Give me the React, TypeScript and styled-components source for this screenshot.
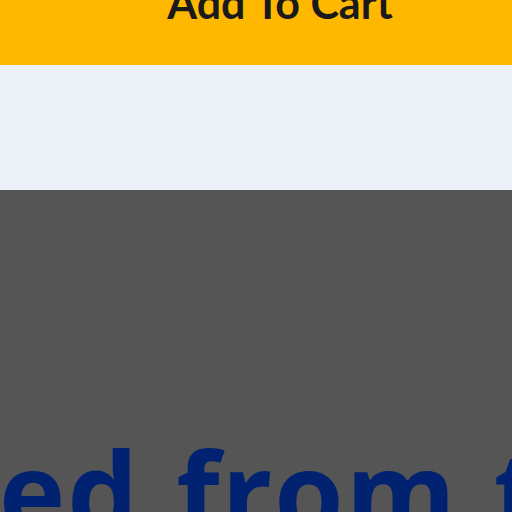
import React from "react";
import styled, { createGlobalStyle } from "styled-components";

const Global = createGlobalStyle`
  html, body { margin: 0; padding: 0; background: #555555; overflow: hidden; }
  #root { width: 512px; height: 512px; overflow: hidden; }
`;

const Page = styled.div`
  width: 512px;
  height: 512px;
  display: flex;
  flex-direction: column;
  overflow: hidden;
  background: #555555;
`;

const CartBar = styled.div`
  height: 65px;
  flex: none;
  background: #ffb800;
  display: flex;
  justify-content: center;
  align-items: flex-start;
  padding-left: 48px;
  overflow: hidden;
`;

const CartLabel = styled.span`
  font-family: "Lato", "Liberation Sans", sans-serif;
  font-weight: 700;
  font-size: 43px;
  line-height: 43px;
  color: #1a1a1a;
  margin-top: -19px;
  white-space: nowrap;
`;

const Band = styled.div`
  height: 125px;
  flex: none;
  background: #edf2f9;
`;

const Dark = styled.section`
  flex: 1;
  display: flex;
  flex-direction: column;
  justify-content: flex-end;
  overflow: hidden;
`;

const Headline = styled.h1`
  margin: 0 0 -43px -1px;
  font-family: "Open Sans", "DejaVu Sans", sans-serif;
  font-weight: 700;
  font-size: 112px;
  line-height: 130px;
  letter-spacing: 2px;
  word-spacing: 5px;
  color: #002270;
  white-space: nowrap;
`;

export default function App() {
  return (
    <Page>
      <Global />
      <CartBar>
        <CartLabel>Add To Cart</CartLabel>
      </CartBar>
      <Band />
      <Dark>
        <Headline>ed from the</Headline>
      </Dark>
    </Page>
  );
}
